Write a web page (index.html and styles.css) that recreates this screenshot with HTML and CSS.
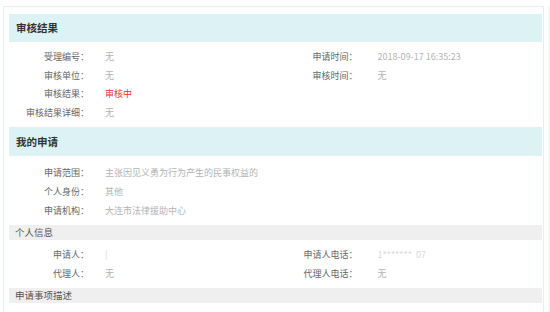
FILE: index.html
```html
<!DOCTYPE html>
<html lang="zh-CN">
<head>
    <meta charset="UTF-8">
    <title>审核结果</title>
    <link rel="stylesheet" href="styles.css">
</head>
<body>
    <div class="page">
        <div class="panel">
            <div class="card">
                <div class="card-head">审核结果</div>
                <div class="card-body grid">
                    <div class="row"><span class="label">受理编号：</span><span class="value">无</span></div>
                    <div class="row"><span class="label">申请时间：</span><span class="value">2018-09-17 16:35:23</span></div>
                    <div class="row"><span class="label">审核单位：</span><span class="value">无</span></div>
                    <div class="row"><span class="label">审核时间：</span><span class="value">无</span></div>
                    <div class="row"><span class="label">审核结果：</span><span class="value red">审核中</span></div>
                    <div class="row"></div>
                    <div class="row"><span class="label">审核结果详细：</span><span class="value">无</span></div>
                </div>
            </div>

            <div class="card">
                <div class="card-head">我的申请</div>
                <div class="card-body list">
                    <div class="row"><span class="label">申请范围：</span><span class="value">主张因见义勇为行为产生的民事权益的</span></div>
                    <div class="row"><span class="label">个人身份：</span><span class="value">其他</span></div>
                    <div class="row"><span class="label">申请机构：</span><span class="value">大连市法律援助中心</span></div>
                </div>
                <div class="sub-head">个人信息</div>
                <div class="card-body grid tight">
                    <div class="row"><span class="label">申请人：</span><span class="value faint">|</span></div>
                    <div class="row"><span class="label">申请人电话：</span><span class="value faint">1*******&nbsp;&nbsp;07</span></div>
                    <div class="row"><span class="label">代理人：</span><span class="value">无</span></div>
                    <div class="row"><span class="label">代理人电话：</span><span class="value">无</span></div>
                </div>
                <div class="sub-head">申请事项描述</div>
                <div class="card-body"></div>
            </div>
        </div>
        <div class="side"></div>
    </div>
</body>
</html>
```

FILE: styles.css
```css
html, body {
    margin: 0;
    padding: 0;
    background: #fff;
}
body {
    font-family: "Noto Sans CJK SC", "Liberation Sans", sans-serif;
    font-size: 9px;
    color: #555;
    overflow: hidden;
}
.page {
    display: flex;
    height: 312px;
    padding: 6px 0 0 3px;
    box-sizing: border-box;
}
.panel {
    width: 534px;
    border: 1px solid #e6eef0;
    border-bottom: none;
    padding: 7px 1px 0 5px;
}
.side {
    width: 1px;
    margin-left: 5px;
    background: #e4eef2;
}
.card {
    border-bottom: 1px solid #ececec;
}
.card-head {
    height: 28px;
    line-height: 28px;
    padding-left: 7px;
    background: #ddf2f4;
    color: #333;
    font-size: 10.5px;
    font-weight: bold;
}
.card-body {
    padding: 5px 0 5px;
}
.card-body.list {
    padding: 7px 0 5px;
}
.grid {
    display: grid;
    grid-template-columns: 1fr 1fr;
}
.grid.tight {
    padding: 5px 0 4px;
}
.row {
    display: flex;
    align-items: center;
    height: 18.8px;
}
.tight .row {
    height: 19.5px;
}
.label {
    width: 80px;
    text-align: right;
    color: #666;
    flex-shrink: 0;
}
.grid .row:nth-child(even) .label {
    width: 82px;
}
.value {
    padding-left: 16px;
    color: #b3b3b3;
}
.grid .row:nth-child(even) .value {
    padding-left: 20px;
}
.value.red {
    color: #e8322e;
}
.value.faint {
    color: #d8d8d8;
}
.sub-head {
    height: 15px;
    line-height: 15px;
    padding-left: 6px;
    background: #efefef;
    color: #555;
    font-size: 9.5px;
}
```
